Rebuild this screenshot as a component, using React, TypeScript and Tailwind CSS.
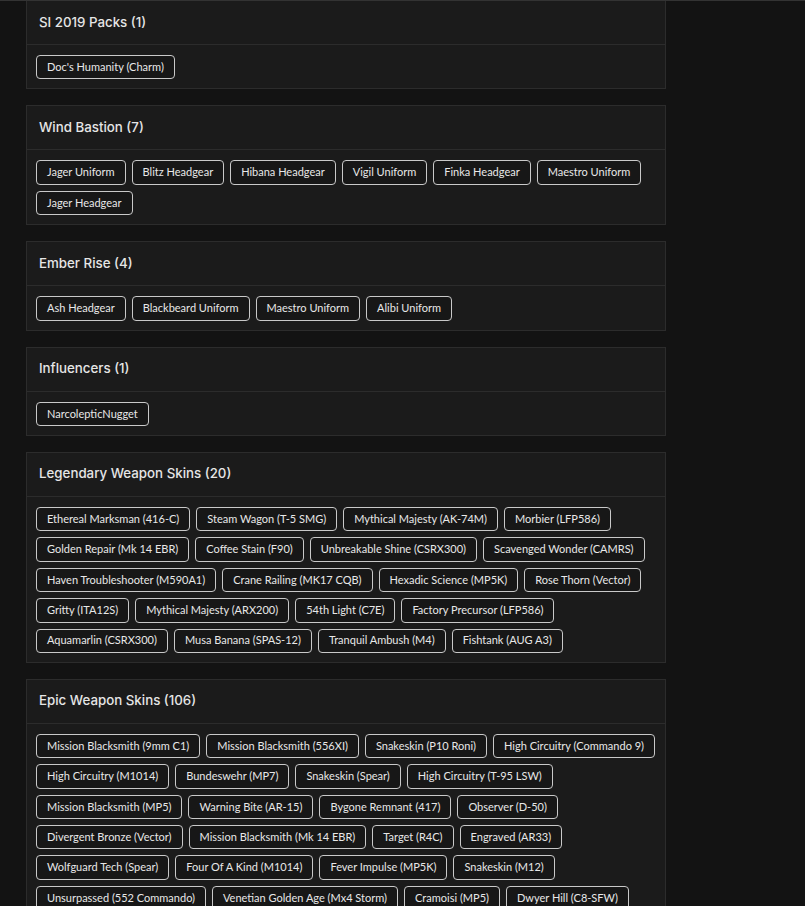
import React from "react";

type Group = { title: string; items: string[] };

const groups: Group[] = [
  { title: "SI 2019 Packs", items: ["Doc's Humanity (Charm)"] },
  {
    title: "Wind Bastion",
    items: ["Jager Uniform", "Blitz Headgear", "Hibana Headgear", "Vigil Uniform", "Finka Headgear", "Maestro Uniform", "Jager Headgear"]
  },
  { title: "Ember Rise", items: ["Ash Headgear", "Blackbeard Uniform", "Maestro Uniform", "Alibi Uniform"] },
  { title: "Influencers", items: ["NarcolepticNugget"] },
  {
    title: "Legendary Weapon Skins",
    items: [
      "Ethereal Marksman (416-C)",
      "Steam Wagon (T-5 SMG)",
      "Mythical Majesty (AK-74M)",
      "Morbier (LFP586)",
      "Golden Repair (Mk 14 EBR)",
      "Coffee Stain (F90)",
      "Unbreakable Shine (CSRX300)",
      "Scavenged Wonder (CAMRS)",
      "Haven Troubleshooter (M590A1)",
      "Crane Railing (MK17 CQB)",
      "Hexadic Science (MP5K)",
      "Rose Thorn (Vector)",
      "Gritty (ITA12S)",
      "Mythical Majesty (ARX200)",
      "54th Light (C7E)",
      "Factory Precursor (LFP586)",
      "Aquamarlin (CSRX300)",
      "Musa Banana (SPAS-12)",
      "Tranquil Ambush (M4)",
      "Fishtank (AUG A3)"
    ]
  },
  {
    title: "Epic Weapon Skins",
    items: [
      "Mission Blacksmith (9mm C1)",
      "Mission Blacksmith (556XI)",
      "Snakeskin (P10 Roni)",
      "High Circuitry (Commando 9)",
      "High Circuitry (M1014)",
      "Bundeswehr (MP7)",
      "Snakeskin (Spear)",
      "High Circuitry (T-95 LSW)",
      "Mission Blacksmith (MP5)",
      "Warning Bite (AR-15)",
      "Bygone Remnant (417)",
      "Observer (D-50)",
      "Divergent Bronze (Vector)",
      "Mission Blacksmith (Mk 14 EBR)",
      "Target (R4C)",
      "Engraved (AR33)",
      "Wolfguard Tech (Spear)",
      "Four Of A Kind (M1014)",
      "Fever Impulse (MP5K)",
      "Snakeskin (M12)",
      "Unsurpassed (552 Commando)",
      "Venetian Golden Age (Mx4 Storm)",
      "Cramoisi (MP5)",
      "Dwyer Hill (C8-SFW)"
    ]
  }
];

const counts: Record<string, number> = { "Epic Weapon Skins": 106 };

function GroupCard({ group }: { group: Group }) {
  const count = counts[group.title] ?? group.items.length;
  return (
    <section className="w-[640px] shrink-0 border border-[#2c2c2c] bg-[#1b1b1b]">
      <header className="flex h-[44px] items-center border-b border-[#2c2c2c] px-[12px]">
        <h2 className="font-['Inter'] text-[13.3px] font-medium text-[#e6e6e6]">
          {group.title} ({count})
        </h2>
      </header>
      <div className="flex flex-wrap gap-[6px] px-[9px] pt-[10px] pb-[9px]">
        {group.items.map((item, i) => (
          <span
            key={i}
            className="flex h-[24.4px] items-center rounded-[4px] border border-[#c9c9c9] bg-[#171717] px-[10px] font-['Lato'] text-[11px] text-[#e8e8e8]"
          >
            {item}
          </span>
        ))}
      </div>
    </section>
  );
}

export default function App() {
  return (
    <div className="h-[906px] overflow-hidden border-t border-[#333333] bg-[#131313] pl-[26px] font-['Inter',sans-serif]">
      <div className="-mt-px flex flex-col gap-[16px]">
        {groups.map((g) => (
          <GroupCard key={g.title} group={g} />
        ))}
      </div>
    </div>
  );
}
